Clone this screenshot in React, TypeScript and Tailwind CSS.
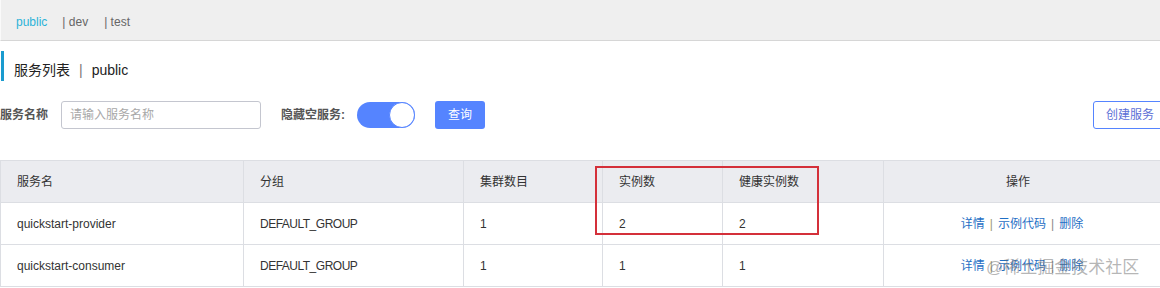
import React from "react";

const font = { fontFamily: '"Liberation Sans", Arial, "Noto Sans CJK SC", sans-serif' };

const cols = [
  { w: "w-[243px]", label: "服务名" },
  { w: "w-[220px]", label: "分组" },
  { w: "w-[139px]", label: "集群数目" },
  { w: "w-[120px]", label: "实例数" },
  { w: "w-[161px]", label: "健康实例数" },
];

const rows = [
  ["quickstart-provider", "DEFAULT_GROUP", "1", "2", "2"],
  ["quickstart-consumer", "DEFAULT_GROUP", "1", "1", "1"],
];

function Links() {
  return (
    <div className="flex items-center justify-center text-[12px] text-[#1f6fc5]">
      <span>详情</span>
      <span className="mx-[5px] text-[#9b9b7b]">|</span>
      <span>示例代码</span>
      <span className="mx-[5px] text-[#888]">|</span>
      <span>删除</span>
    </div>
  );
}

export default function App() {
  return (
    <div className="w-[1160px] h-[288px] overflow-hidden bg-white relative text-[#333]" style={font}>
      {/* top tabs */}
      <div className="h-[41px] bg-[#efefef] border-b border-[#d6d6d6] border-l border-l-[#fafafa] flex items-center pt-[3px] pl-[15px] text-[12px]">
        <span className="text-[#2cb3d8]">public</span>
        <span className="ml-[15px] text-[#666]">|&nbsp;dev</span>
        <span className="ml-[16px] text-[#666]">|&nbsp;test</span>
      </div>

      {/* title */}
      <div className="mt-[10px] h-[30px] border-l-[3px] border-[#1a9bcf] ml-[1px] flex items-center pt-[8px] pl-[10px] text-[14px] text-[#222]">
        <span>服务列表</span>
        <span className="mx-[9px] text-[#777]">|</span>
        <span>public</span>
      </div>

      {/* search row */}
      <div className="mt-[20px] h-[28px] flex items-center text-[12px]">
        <span className="font-bold text-[#555] w-[61px]">服务名称</span>
        <div className="w-[200px] h-[28px] border border-[#c4c6cf] rounded-[3px] flex items-center pl-[8px] text-[#a8a8a8]">
          请输入服务名称
        </div>
        <span className="ml-[20px] font-bold text-[#555]">隐藏空服务:</span>
        <div className="ml-[12px] w-[58px] h-[26px] rounded-full bg-[#5584ff] relative">
          <div className="absolute right-0 top-0 w-[26px] h-[26px] rounded-full bg-white border border-[#5584ff]" />
        </div>
        <div className="ml-[20px] w-[50px] h-[28px] rounded-[3px] bg-[#5584ff] text-white flex items-center justify-center text-[12px]">
          查询
        </div>
        <div className="ml-auto mr-[-8px] w-[75px] h-[28px] rounded-[3px] border border-[#5584ff] text-[#5c6fd6] flex items-center pl-[12px] text-[12px] bg-white">
          创建服务
        </div>
      </div>

      {/* table */}
      <div className="mt-[31px] border-t border-l border-[#dcdee3] text-[12px]">
        <div className="flex h-[42px] bg-[#ebecf0] border-b border-[#dcdee3]">
          {cols.map((c) => (
            <div key={c.label} className={`${c.w} shrink-0 border-r border-[#dcdee3] flex items-center pl-[16px] text-[#333]`}>
              {c.label}
            </div>
          ))}
          <div className="flex-1 flex items-center justify-center text-[#333] pr-[8px]">操作</div>
        </div>
        {rows.map((r, i) => (
          <div key={i} className="flex h-[42px] border-b border-[#dcdee3]">
            {r.map((v, j) => (
              <div key={j} className={`${cols[j].w} shrink-0 border-r border-[#dcdee3] flex items-center pl-[16px] ${j === 1 ? "tracking-[-0.5px]" : ""}`}>
                {v}
              </div>
            ))}
            <div className="flex-1 flex items-center justify-center pl-[4px] pr-[4px]">
              <Links />
            </div>
          </div>
        ))}
      </div>

      {/* highlight box */}
      <div className="absolute left-[595px] top-[166px] w-[224px] h-[69px] border-2 border-[#d4303a]" />

      {/* watermark */}
      <div className="absolute left-[986px] top-[255px] text-[17px] text-[rgba(110,110,110,0.5)] whitespace-nowrap">
        @稀土掘金技术社区
      </div>
    </div>
  );
}
